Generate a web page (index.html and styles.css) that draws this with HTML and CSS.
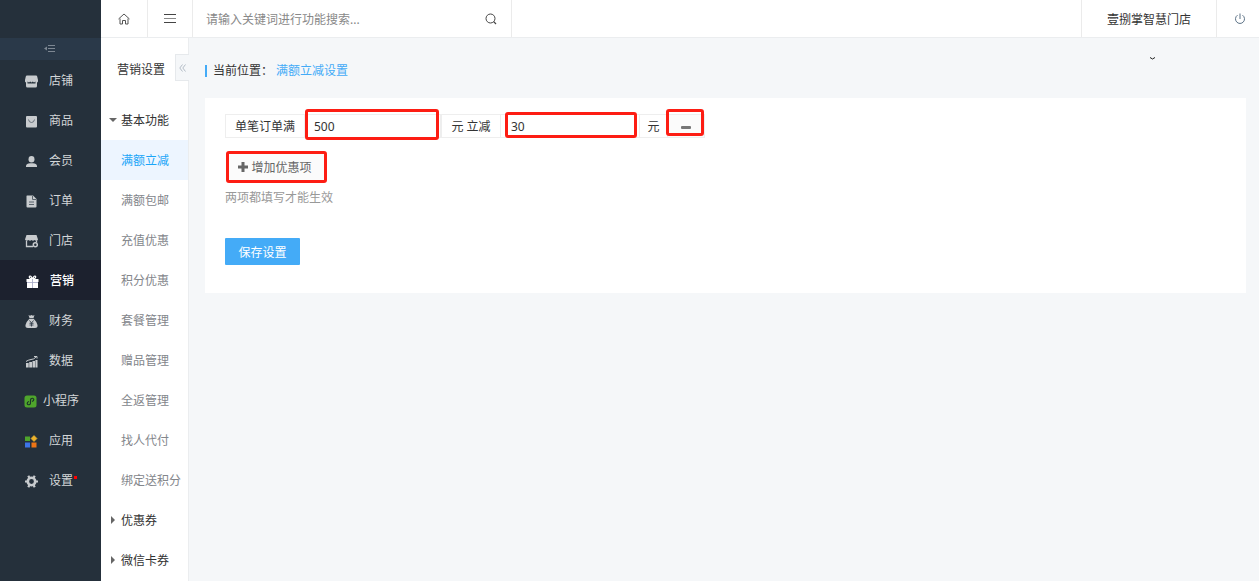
FILE: index.html
```html
<!DOCTYPE html>
<html lang="zh-CN">
<head>
<meta charset="utf-8">
<meta name="viewport" content="width=device-width, initial-scale=1">
<title>满额立减设置</title>
<link rel="stylesheet" href="styles.css">
</head>
<body>
<div class="app">
  <nav class="sidebar" aria-label="主菜单">
    <div class="brand"></div>
    <button class="fold" type="button" aria-label="折叠菜单">
      <svg width="12" height="8" viewBox="0 0 12 8"><path d="M0 3.500L3 1.500v4z" fill="#7d8792"/><path d="M4 .5h7M4 3.500h7M4 6.500h7" stroke="#7d8792"/></svg>
    </button>
    <a class="item" href="#"><svg class="icon" viewBox="0 0 13 13"><path fill-rule="evenodd" d="M2 .5h9q1 0 1.200 1L13 5v1.500q-.5 1-1 1V11q0 1.500-1.500 1.500h-8Q1 12.500 1 11V7.500Q0 7 0 6.500V5l.8-3.500Q1 .5 2 .5zM2.500 6.500v2h8v-2L9 7.500 7.800 6.500 6.500 7.500 5.200 6.500 4 7.500z"/></svg>店铺</a>
    <a class="item" href="#"><svg class="icon" viewBox="0 0 13 13"><rect x="1" y="1" width="11" height="11.500" rx="1"/><path d="M3.500 4.500q.5 3 3 3t3-3" fill="none" stroke="#68717a"/></svg>商品</a>
    <a class="item" href="#"><svg class="icon" viewBox="0 0 13 13"><ellipse cx="6.500" cy="4.300" rx="3" ry="3.300"/><path d="M1 12v-1.500Q1.500 8.500 5 8.200h3q3.500.3 4 2.300V12z"/></svg>会员</a>
    <a class="item" href="#"><svg class="icon" viewBox="0 0 13 13"><path d="M2 .5h6L11.500 4v7.500q0 1-1 1H2.500q-1 0-1-1v-10q0-1 .5-1z"/><path d="M7.500 1v3.500H11M4 7h5M4 9.500h5" fill="none" stroke="#59636c"/></svg>订单</a>
    <a class="item" href="#"><svg class="icon" viewBox="0 0 13 13"><path d="M1.500 0h10L13 4.500q-.5 1.300-1.600 1.300T9.500 5Q8 6.500 6.500 5 5 6.500 3.500 5 2 6.300.8 5.500L0 4.500z"/><path d="M1.500 6v5.500H8M11.500 5.500v2" fill="none" stroke="#c8cbce" stroke-width="1.300"/><circle cx="10.300" cy="9.800" r="2" fill="none" stroke="#c8cbce" stroke-width="1.500"/></svg>门店</a>
    <a class="item item-active" href="#" aria-current="page"><svg class="icon" viewBox="0 0 13 13"><path d="M.5 4h12v3H.5zM1 7h11v6H1z"/><path d="M6.500 4Q3 3.500 3.300 1.600 4.500-.3 6.500 4 8.500-.3 9.700 1.600 10 3.500 6.500 4z" fill="none" stroke="#fff" stroke-width="1.200"/><path d="M6.500 4v9M1 7.500h11" stroke="#a3a6c4" stroke-width=".8"/></svg>营销</a>
    <a class="item" href="#"><svg class="icon" viewBox="0 0 13 13"><path d="M3.500 0l1.500.8L6.500 0 8 .8 9.500 0 8.500 3h-4zM4.300 3.700h4.400Q12 7 12.500 10q.5 3-2.500 3H3Q0 13 .5 10 1 7 4.300 3.700z"/><path d="M4.500 5.500l2 2.500 2-2.500M6.500 8v3.500M4.500 8.300h4M4.500 10h4" fill="none" stroke="#33404c" stroke-width=".9"/></svg>财务</a>
    <a class="item" href="#"><svg class="icon" viewBox="0 0 13 13"><path d="M1 8h2.700v4.500H1zM4.200 7H7v5.500H4.200zM7.500 6H10v6.500H7.500zM10.400 5h2.100v7.500h-2.100z"/><path d="M1 6.500Q3 5 6 4.500q3 0 5-2.500M9 1.500h3v2" fill="none" stroke="#c8cbce"/></svg>数据</a>
    <a class="item item-wide" href="#"><svg class="icon" viewBox="0 0 13 13"><rect x=".5" y=".5" width="12" height="12" rx="2.500" fill="#4fa52c"/><path d="M5 6.500Q3 7 3.200 8.700q1 1.800 2.800.5.600-.5.500-2.700-.1-2.200.5-2.700 1.800-1.300 2.800.5Q10 6 8 6.500" fill="none" stroke="#1d3629" stroke-width="1.200"/></svg>小程序</a>
    <a class="item" href="#"><svg class="icon" viewBox="0 0 13 13"><path d="M0 1.500h5V6H0z" fill="#4fa52c"/><path d="M9 .5l3 3-3 3-3-3z" fill="#eeb32c" stroke="#eeb32c" stroke-width=".6"/><path d="M0 7.500h5v5H0z" fill="#3d74e8"/><path d="M6.500 7.500h5v5h-5z" fill="#ee7415"/></svg>应用</a>
    <a class="item" href="#"><svg class="icon" viewBox="0 0 13 13"><circle cx="6.500" cy="6.500" r="3.700" fill="none" stroke="#c8cbce" stroke-width="2.600"/><path d="M3.300.8l1 2M9.700.8l-1 2M0 6.500h2M11 6.500h2M3.300 12.200l1-2M9.700 12.200l-1-2" stroke="#c8cbce" stroke-width="2.200"/></svg><span class="dotted">设置</span></a>
  </nav>

  <div class="body">
    <header class="topbar">
      <a class="tool" href="#" aria-label="首页"><svg width="12" height="12" viewBox="0 0 12 12"><path d="M.5 6L6 1l5.500 5M2 5.500V11h2.500V7.500h3V11H10V5.500" fill="none" stroke="#555"/></svg></a>
      <button class="tool" type="button" aria-label="菜单"><svg width="12" height="10" viewBox="0 0 12 10"><path d="M0 .5h12M0 8.500h12" stroke="#444"/><path d="M0 4.500h12" stroke="#888"/></svg></button>
      <form class="search">
        <input class="search-input" type="text" aria-label="功能搜索" placeholder="请输入关键词进行功能搜索...">
        <button class="search-button" type="button" aria-label="搜索"><svg width="12" height="12" viewBox="0 0 12 12"><circle cx="5.500" cy="5.500" r="4.500" fill="none" stroke="#444"/><path d="M8.700 8.700l2.300 2.300" stroke="#444" stroke-width="1.200"/></svg></button>
      </form>
      <a class="shop" href="#">壹捌掌智慧门店</a>
      <button class="power" type="button" aria-label="退出"><svg width="12" height="12" viewBox="0 0 12 12"><path d="M3.500 2.200a4.500 4.500 0 1 0 5 0M6 .5V6" fill="none" stroke="#5c7286"/></svg></button>
    </header>

    <div class="columns">
      <nav class="subnav" aria-label="营销设置">
        <div class="subnav-head">营销设置
          <button class="collapse" type="button" aria-label="收起"><svg width="7" height="8" viewBox="0 0 7 8"><path d="M3.500.5L.8 4l2.700 3.500M6.500.5L3.800 4l2.700 3.500" fill="none" stroke="#b3bcc6"/></svg></button>
        </div>
        <a class="sub group open" href="#">基本功能</a>
        <a class="sub sub-active" href="#" aria-current="page">满额立减</a>
        <a class="sub" href="#">满额包邮</a>
        <a class="sub" href="#">充值优惠</a>
        <a class="sub" href="#">积分优惠</a>
        <a class="sub" href="#">套餐管理</a>
        <a class="sub" href="#">赠品管理</a>
        <a class="sub" href="#">全返管理</a>
        <a class="sub" href="#">找人代付</a>
        <a class="sub" href="#">绑定送积分</a>
        <a class="sub group" href="#">优惠券</a>
        <a class="sub group" href="#">微信卡券</a>
      </nav>

      <main class="main">
        <div class="crumbs">
          <span class="crumb-label">当前位置：</span><a class="crumb-link" href="#">满额立减设置</a>
          <svg class="caret" width="5" height="3" viewBox="0 0 5 3"><path d="M0 .5l2.500 1.500L5 .5" fill="none" stroke="#222"/></svg>
        </div>
        <form class="panel">
          <div class="rule">
            <label class="addon addon-order" for="full">单笔订单满</label>
            <span class="field field-full marked"><input class="amount" id="full" type="text" value="500"></span>
            <label class="addon addon-cut" for="cut">元 立减</label>
            <span class="field field-cut marked"><input class="amount" id="cut" type="text" value="30"></span>
            <span class="addon addon-unit">元</span>
            <span class="field field-remove marked"><button class="remove" type="button" aria-label="删除"><svg width="10" height="3" viewBox="0 0 10 3"><rect width="10" height="3" rx="1" fill="#777"/></svg></button></span>
          </div>
          <button class="add" type="button"><svg width="10" height="10" viewBox="0 0 10 10"><path d="M5 0v10M0 5h10" stroke="#666" stroke-width="3"/></svg><span class="label">增加优惠项</span></button>
          <p class="hint">两项都填写才能生效</p>
          <button class="save" type="submit">保存设置</button>
        </form>
      </main>
    </div>
  </div>
</div>
</body>
</html>
```
FILE: styles.css
```css
*, *::before, *::after { box-sizing: border-box; }

body, button, input {
  font: 12px/20px "Noto Sans", "Noto Sans CJK SC", sans-serif;
}

body {
  margin: 0;
  color: #333;
  background: #f5f7f9;
}

a { color: inherit; text-decoration: none; }

button {
  padding: 0;
  border: 0;
  background: none;
  color: inherit;
  cursor: pointer;
}

svg { display: block; flex: none; }

.app { display: flex; min-height: 100vh; }

/* Main menu */
.sidebar {
  flex: none;
  width: 101px;
  background: #25303b;
  color: #d3d6d8;
}

.brand { height: 38px; }

.fold {
  display: flex;
  align-items: center;
  justify-content: center;
  width: 100%;
  height: 22px;
  padding-right: 2px;
  background: #2a3949;
}

.item {
  display: flex;
  align-items: center;
  gap: 11px;
  height: 40px;
  padding: 2px 0 0 25px;
}

.item-wide { gap: 6px; padding-left: 24px; }
.item-active { padding-left: 26px; background: #1c212e; color: #fff; font-weight: 500; }
.icon { width: 13px; height: 13px; fill: #c8cbce; }
.item-active .icon { fill: #fff; }
.dotted { position: relative; }

.dotted::after {
  content: "";
  position: absolute;
  top: 5px;
  right: -4px;
  width: 3px;
  height: 3px;
  background: #f00;
}

/* Top bar */
.body { display: flex; flex: 1; flex-direction: column; min-width: 0; }

.topbar {
  display: flex;
  height: 38px;
  border-bottom: 1px solid #ebedef;
  background: #fff;
}

.tool, .power {
  display: flex;
  align-items: center;
  justify-content: center;
  width: 45px;
}

.tool { border-right: 1px solid #ebebeb; }
.tool:first-child { width: 47px; }

.search {
  display: flex;
  width: 319px;
  border-right: 1px solid #ebebeb;
}

.search-input {
  flex: 1;
  min-width: 0;
  padding: 2px 0 0 13px;
  border: 0;
  outline: 0;
  background: none;
}

.search-input::placeholder { color: #888; opacity: 1; }

.search-button {
  display: flex;
  align-items: center;
  justify-content: center;
  width: 40px;
}

.shop {
  display: flex;
  align-items: center;
  margin-left: auto;
  padding: 2px 25px 0;
  border: solid #ebebeb;
  border-width: 0 1px;
}

.power { width: 42px; padding-left: 4px; }

/* Second-level menu */
.columns { display: flex; flex: 1; }

.subnav {
  flex: none;
  width: 88px;
  border-right: 1px solid #ebedef;
  background: #fff;
}

.subnav-head {
  position: relative;
  display: flex;
  align-items: center;
  height: 62px;
  padding: 2px 0 0 16px;
}

.collapse {
  position: absolute;
  top: 16px;
  right: -1px;
  display: flex;
  align-items: center;
  justify-content: center;
  width: 14px;
  height: 27px;
  border: 1px solid #e6e9ec;
  border-right: 0;
  background: #f5f7f9;
}

.sub {
  display: flex;
  align-items: center;
  height: 40px;
  padding: 2px 0 0 20px;
  color: #83868b;
}

.sub-active { background: #edf5ff; color: #1ba5f8; }
.group { gap: 6px; padding-left: 10px; color: #333; }

.group::before {
  content: "";
  margin-bottom: 2px;
  border: solid transparent;
  border-width: 4px 0 4px 4px;
  border-left-color: #666;
}

.open { gap: 4px; padding-left: 8px; }

.open::before {
  border-width: 4px 4px 0;
  border-color: #666 transparent transparent;
}

/* Content */
.main { flex: 1; min-width: 0; padding: 16px 13px 16px 16px; }

.crumbs {
  display: flex;
  align-items: center;
  height: 32px;
  margin-bottom: 12px;
  padding-top: 2px;
}

.crumb-label {
  padding-left: 6px;
  border-left: 2px solid #44abf7;
  line-height: 12px;
}

.crumb-link { margin-left: 3px; color: #44abf7; }
.caret { margin: 0 91px 26px auto; }

.panel {
  display: flex;
  flex-direction: column;
  align-items: flex-start;
  padding: 16px 20px 28px;
  background: #fff;
}

.rule { display: flex; height: 24px; }

.addon {
  display: flex;
  align-items: center;
  justify-content: center;
  padding-top: 2px;
  border: 1px solid #eee;
  border-right: 0;
}

.addon-order { width: 79px; }
.addon-cut { width: 59px; }
.addon-unit { width: 28px; }

.field {
  position: relative;
  display: flex;
  border: 1px solid #eee;
}

.field-full { width: 137px; padding-left: 9px; }
.field-cut { width: 139px; padding-left: 10px; border-right: 0; }
.field-remove { width: 38px; background: #fbfbfb; }

.amount {
  width: 100%;
  padding: 2px 0 0;
  border: 0;
  outline: 0;
  background: none;
  color: #333;
}

.remove {
  display: flex;
  flex: 1;
  align-items: center;
  justify-content: center;
  padding-top: 2px;
}

/* Red frames laid over the controls */
.marked::after {
  content: "";
  position: absolute;
  inset: -6px 1px -3px 0;
  border: 3px solid #fd1d13;
  border-radius: 3px;
  pointer-events: none;
}

.field-cut::after { inset: -3px 2px -1px 4px; }
.field-remove::after { inset: -6px 0 1px -2px; }

.add {
  display: flex;
  align-items: center;
  justify-content: center;
  gap: 3px;
  width: 101px;
  height: 32px;
  margin: 13px 0 0 1px;
  padding-right: 3px;
  border: 3px solid #fd1d13;
  border-radius: 3px;
  background: #fbfbfb;
  color: #666;
}

.label { padding-top: 2px; }

.hint { margin: 5px 0 30px; color: #999; }

.save {
  width: 75px;
  height: 27px;
  padding-top: 2px;
  border-radius: 1px;
  background: #44abf7;
  color: #fff;
}
```
